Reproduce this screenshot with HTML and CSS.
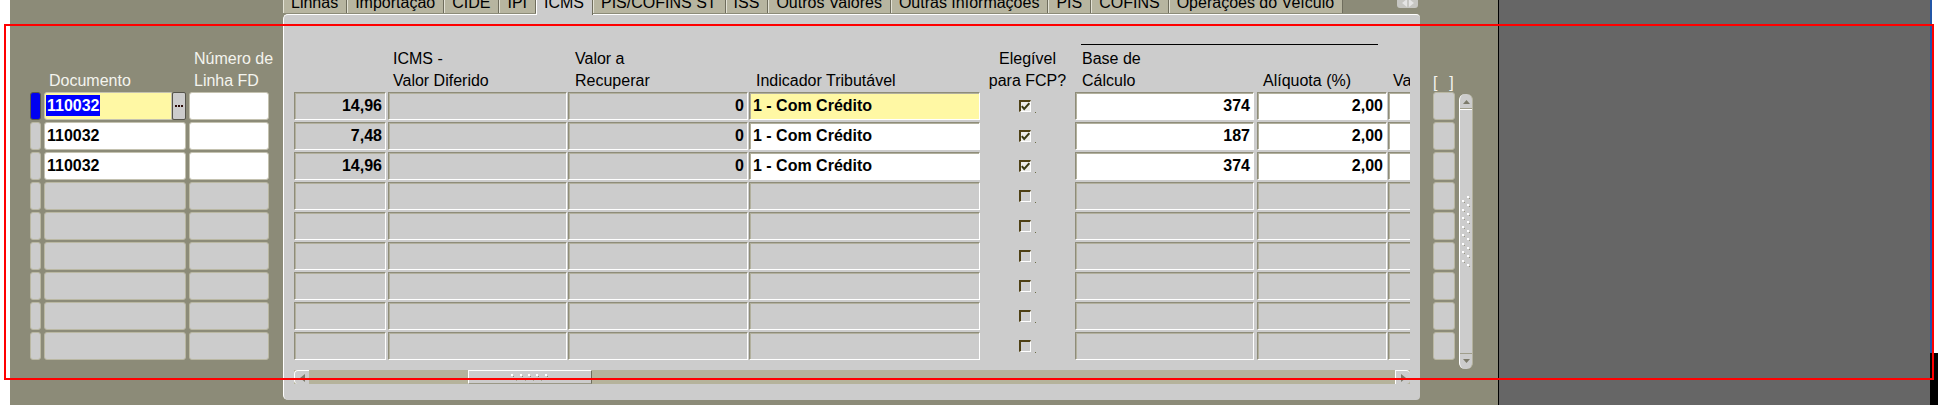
FILE: index.html
```html
<!DOCTYPE html>
<html>
<head>
<meta charset="utf-8">
<link rel="stylesheet" href="styles.css">
</head>
<body>
<div class="screen">
  <div class="edge-left"></div>
  <div class="window">
    <section class="left">
      <div class="head">
        <div class="w-ind"></div>
        <div class="w-doc lbl">Documento</div>
        <div class="w-num lbl">Número de<br>Linha FD</div>
      </div>
      <div class="rows">
        <div class="lrow">
          <div class="ind cur"></div>
          <div class="w-doc docwrap">
            <div class="lf yellow docmain"><span class="hl">110032</span></div>
            <div class="lov"><svg width="8" height="2" viewBox="0 0 8 2"><rect x="0" y="0" width="2" height="2" fill="#2b0b08"/><rect x="3" y="0" width="2" height="2" fill="#2b0b08"/><rect x="6" y="0" width="2" height="2" fill="#2b0b08"/></svg></div>
          </div>
          <div class="lf white w-num"></div>
        </div>
        <div class="lrow"><div class="ind"></div><div class="lf white w-doc">110032</div><div class="lf white w-num"></div></div>
        <div class="lrow"><div class="ind"></div><div class="lf white w-doc">110032</div><div class="lf white w-num"></div></div>
        <div class="lrow"><div class="ind"></div><div class="lf w-doc"></div><div class="lf w-num"></div></div>
        <div class="lrow"><div class="ind"></div><div class="lf w-doc"></div><div class="lf w-num"></div></div>
        <div class="lrow"><div class="ind"></div><div class="lf w-doc"></div><div class="lf w-num"></div></div>
        <div class="lrow"><div class="ind"></div><div class="lf w-doc"></div><div class="lf w-num"></div></div>
        <div class="lrow"><div class="ind"></div><div class="lf w-doc"></div><div class="lf w-num"></div></div>
        <div class="lrow"><div class="ind"></div><div class="lf w-doc"></div><div class="lf w-num"></div></div>
      </div>
    </section>

    <section class="tabarea">
      <div class="tabs">
        <div class="tab">Linhas</div>
        <div class="tab">Importação</div>
        <div class="tab">CIDE</div>
        <div class="tab">IPI</div>
        <div class="tab active">ICMS</div>
        <div class="tab">PIS/COFINS ST</div>
        <div class="tab">ISS</div>
        <div class="tab">Outros Valores</div>
        <div class="tab">Outras Informações</div>
        <div class="tab">PIS</div>
        <div class="tab">COFINS</div>
        <div class="tab">Operações do Veículo</div>
        <div class="tabnav">
          <svg width="14" height="8" viewBox="0 0 14 8"><polygon points="1,4 6,0 6,8" fill="#e4e4e4"/><polygon points="13,4 8,0 8,8" fill="#e4e4e4"/></svg>
        </div>
      </div>
      <div class="panel">
        <div class="viewport">
          <div class="phead">
            <div class="c1"></div>
            <div class="c2 lbl pl5">ICMS -<br>Valor Diferido</div>
            <div class="c3 lbl pl7">Valor a<br>Recuperar</div>
            <div class="c4 lbl pl7">Indicador Tributável</div>
            <div class="ck lbl center">Elegível<br>para FCP?</div>
            <div class="group">
              <div class="gline"></div>
              <div class="gcols">
                <div class="c6 lbl pl7">Base de<br>Cálculo</div>
                <div class="c7 lbl pl6">Alíquota (%)</div>
              </div>
            </div>
            <div class="c8 lbl pl5">Valor</div>
          </div>
          <div class="prows">
            <div class="prow">
              <div class="pc c1 num">14,96</div><div class="pc c2"></div><div class="pc c3 num">0</div><div class="pc c4 yellow">1 - Com Crédito</div>
              <div class="ck cbcell"><span class="cb on"><svg width="9" height="9" viewBox="0 0 9 9"><path d="M0.8 4.2 L3.2 7 L8.4 1.2" stroke="#3b3913" stroke-width="2" fill="none"/></svg></span><span class="dot"></span></div>
              <div class="pc c6 white num">374</div><div class="pc c7 white num">2,00</div><div class="pc c8 white"></div>
            </div>
            <div class="prow">
              <div class="pc c1 num">7,48</div><div class="pc c2"></div><div class="pc c3 num">0</div><div class="pc c4 white">1 - Com Crédito</div>
              <div class="ck cbcell"><span class="cb on"><svg width="9" height="9" viewBox="0 0 9 9"><path d="M0.8 4.2 L3.2 7 L8.4 1.2" stroke="#3b3913" stroke-width="2" fill="none"/></svg></span><span class="dot"></span></div>
              <div class="pc c6 white num">187</div><div class="pc c7 white num">2,00</div><div class="pc c8 white"></div>
            </div>
            <div class="prow">
              <div class="pc c1 num">14,96</div><div class="pc c2"></div><div class="pc c3 num">0</div><div class="pc c4 white">1 - Com Crédito</div>
              <div class="ck cbcell"><span class="cb on"><svg width="9" height="9" viewBox="0 0 9 9"><path d="M0.8 4.2 L3.2 7 L8.4 1.2" stroke="#3b3913" stroke-width="2" fill="none"/></svg></span><span class="dot"></span></div>
              <div class="pc c6 white num">374</div><div class="pc c7 white num">2,00</div><div class="pc c8 white"></div>
            </div>
            <div class="prow"><div class="pc c1"></div><div class="pc c2"></div><div class="pc c3"></div><div class="pc c4"></div><div class="ck cbcell"><span class="cb"></span><span class="dot"></span></div><div class="pc c6"></div><div class="pc c7"></div><div class="pc c8"></div></div>
            <div class="prow"><div class="pc c1"></div><div class="pc c2"></div><div class="pc c3"></div><div class="pc c4"></div><div class="ck cbcell"><span class="cb"></span><span class="dot"></span></div><div class="pc c6"></div><div class="pc c7"></div><div class="pc c8"></div></div>
            <div class="prow"><div class="pc c1"></div><div class="pc c2"></div><div class="pc c3"></div><div class="pc c4"></div><div class="ck cbcell"><span class="cb"></span><span class="dot"></span></div><div class="pc c6"></div><div class="pc c7"></div><div class="pc c8"></div></div>
            <div class="prow"><div class="pc c1"></div><div class="pc c2"></div><div class="pc c3"></div><div class="pc c4"></div><div class="ck cbcell"><span class="cb"></span><span class="dot"></span></div><div class="pc c6"></div><div class="pc c7"></div><div class="pc c8"></div></div>
            <div class="prow"><div class="pc c1"></div><div class="pc c2"></div><div class="pc c3"></div><div class="pc c4"></div><div class="ck cbcell"><span class="cb"></span><span class="dot"></span></div><div class="pc c6"></div><div class="pc c7"></div><div class="pc c8"></div></div>
            <div class="prow"><div class="pc c1"></div><div class="pc c2"></div><div class="pc c3"></div><div class="pc c4"></div><div class="ck cbcell"><span class="cb"></span><span class="dot"></span></div><div class="pc c6"></div><div class="pc c7"></div><div class="pc c8"></div></div>
          </div>
          <div class="hscroll">
            <div class="hbtn lft"><svg width="5" height="8" viewBox="0 0 5 8"><polygon points="0,4 5,0 5,8" fill="#7c7a6a"/></svg></div>
            <div class="hthumb">
              <svg width="38" height="8" viewBox="0 0 38 8">
                <rect x="0" y="0" width="2" height="2" fill="#fff"/><rect x="2" y="2" width="1" height="1" fill="#8c8a78"/>
                <rect x="9" y="0" width="2" height="2" fill="#fff"/><rect x="11" y="2" width="1" height="1" fill="#8c8a78"/>
                <rect x="17" y="0" width="2" height="2" fill="#fff"/><rect x="19" y="2" width="1" height="1" fill="#8c8a78"/>
                <rect x="25" y="0" width="2" height="2" fill="#fff"/><rect x="27" y="2" width="1" height="1" fill="#8c8a78"/>
                <rect x="34" y="0" width="2" height="2" fill="#fff"/><rect x="36" y="2" width="1" height="1" fill="#8c8a78"/>
                <rect x="5" y="6" width="1" height="1" fill="#a8a694"/>
                <rect x="14" y="6" width="1" height="1" fill="#a8a694"/><rect x="22" y="6" width="1" height="1" fill="#a8a694"/>
                <rect x="30" y="6" width="1" height="1" fill="#a8a694"/>
              </svg>
            </div>
            <div class="hbtn rgt"><svg width="5" height="8" viewBox="0 0 5 8"><polygon points="5,4 0,0 0,8" fill="#7c7a6a"/></svg></div>
          </div>
        </div>
      </div>
    </section>

    <section class="right">
      <div class="rhead"><div class="rlbl">[&nbsp;&nbsp;]</div></div>
      <div class="rbody">
        <div class="rboxes">
          <div class="rbox"></div><div class="rbox"></div><div class="rbox"></div>
          <div class="rbox"></div><div class="rbox"></div><div class="rbox"></div>
          <div class="rbox"></div><div class="rbox"></div><div class="rbox"></div>
        </div>
        <div class="vscroll">
          <div class="vup"><svg width="7" height="4" viewBox="0 0 7 4"><polygon points="0,4 3.5,0 7,4" fill="#7c7a6a"/></svg></div>
          <div class="vthumb">
            <svg width="8" height="72" viewBox="0 0 8 72">
              <g fill="#fff">
                <rect x="5" y="0" width="2" height="2"/><rect x="0" y="4" width="2" height="2"/>
                <rect x="5" y="8" width="2" height="2"/><rect x="0" y="13" width="2" height="2"/>
                <rect x="5" y="17" width="2" height="2"/><rect x="0" y="21" width="2" height="2"/>
                <rect x="5" y="25" width="2" height="2"/><rect x="0" y="30" width="2" height="2"/>
                <rect x="5" y="34" width="2" height="2"/><rect x="0" y="38" width="2" height="2"/>
                <rect x="5" y="42" width="2" height="2"/><rect x="0" y="47" width="2" height="2"/>
                <rect x="5" y="51" width="2" height="2"/><rect x="0" y="55" width="2" height="2"/>
                <rect x="5" y="59" width="2" height="2"/><rect x="0" y="64" width="2" height="2"/>
                <rect x="5" y="68" width="2" height="2"/>
              </g>
              <g fill="#9c9a88">
                <rect x="7" y="2" width="1" height="1"/><rect x="2" y="6" width="1" height="1"/>
                <rect x="7" y="10" width="1" height="1"/><rect x="2" y="15" width="1" height="1"/>
                <rect x="7" y="19" width="1" height="1"/><rect x="2" y="23" width="1" height="1"/>
                <rect x="7" y="27" width="1" height="1"/><rect x="2" y="32" width="1" height="1"/>
                <rect x="7" y="36" width="1" height="1"/><rect x="2" y="40" width="1" height="1"/>
                <rect x="7" y="44" width="1" height="1"/><rect x="2" y="49" width="1" height="1"/>
                <rect x="7" y="53" width="1" height="1"/><rect x="2" y="57" width="1" height="1"/>
                <rect x="7" y="61" width="1" height="1"/><rect x="2" y="66" width="1" height="1"/>
                <rect x="7" y="70" width="1" height="1"/>
              </g>
            </svg>
          </div>
          <div class="vdown"><svg width="7" height="4" viewBox="0 0 7 4"><polygon points="0,0 3.5,4 7,0" fill="#7c7a6a"/></svg></div>
        </div>
      </div>
    </section>
  </div>
  <div class="divider"></div>
  <div class="desktop"></div>
  <div class="edge-right">
    <div class="er-top"><div class="er-blue"></div><div class="er-white"></div></div>
    <div class="er-bottom"></div>
  </div>
  <div class="annot"></div>
</div>
</body>
</html>
```

FILE: styles.css
```css
* { box-sizing: border-box; }
html, body { margin: 0; padding: 0; }
body {
  width: 1938px;
  height: 405px;
  overflow: hidden;
  background: #fff;
  font-family: "Liberation Sans", Arial, sans-serif;
  font-size: 16px;
  color: #000;
}
.screen { position: relative; display: flex; width: 1938px; height: 405px; }
.edge-left { width: 10px; flex-shrink: 0; background: #fff; }
.window {
  width: 1488px; flex-shrink: 0;
  background: #8c8b78;
  display: flex; align-items: flex-start;
}
.divider { width: 1px; flex-shrink: 0; background: #000; }
.desktop { width: 431px; flex-shrink: 0; background: #666666; }
.edge-right { width: 8px; flex-shrink: 0; display: flex; flex-direction: column; }
.er-top { height: 353px; display: flex; }
.er-blue { width: 2px; background: #2356a6; }
.er-white { flex: 1; background: #fff; }
.er-bottom { flex: 1; background: #000; }
.annot {
  position: absolute; left: 4px; top: 24px;
  width: 1930px; height: 356px;
  border: 2px solid #ff0000;
  pointer-events: none;
}

.lbl { line-height: 22px; white-space: nowrap; }
.pl5 { padding-left: 5px; }
.pl6 { padding-left: 6px; }
.pl7 { padding-left: 7px; }
.center { text-align: center; }

/* left block */
.left { width: 273px; flex-shrink: 0; padding-left: 20px; }
.head { height: 92px; display: flex; align-items: flex-end; gap: 3px; }
.left .lbl { color: #f4f4ee; padding-left: 5px; }
.w-ind { width: 11px; flex-shrink: 0; }
.w-doc { width: 142px; flex-shrink: 0; }
.w-num { width: 80px; flex-shrink: 0; }
.rows { display: flex; flex-direction: column; gap: 2px; }
.lrow { display: flex; gap: 3px; height: 28px; }
.ind {
  width: 11px; flex-shrink: 0;
  border: 1px solid #bab8a3; border-radius: 3px; background: #cccccc;
}
.ind.cur { background: #0000f2; border-color: #5b5a4c; }
.lf {
  height: 28px;
  border: 1px solid #bab8a3; border-radius: 3px;
  background: #cccccc;
  font-weight: bold; line-height: 26px;
  padding: 0 2px; white-space: nowrap; overflow: hidden;
}
.lf.white { background: #ffffff; border-color: #c4c2b0; }
.lf.yellow { background: #fff8a4; border-color: #c4c2b0; }
.docwrap { display: flex; }
.docmain { width: 128px; border-radius: 3px 0 0 3px; }
.lov {
  width: 14px; height: 28px;
  background: #cccccc;
  border: 1px solid #55544a; border-radius: 2px;
  display: flex; align-items: center; justify-content: center;
}
.hl { background: #0000ff; color: #fff; padding: 2px 0 2px 1px; margin-left: -1px; }

/* tab area */
.tabarea { width: 1137px; flex-shrink: 0; display: flex; flex-direction: column; }
.tabs { height: 20px; margin-top: -6px; display: flex; align-items: flex-start; }
.tab {
  height: 19px;
  padding: 0 8px 0 7px;
  line-height: 18px;
  background: #b7b5a0;
  color: #000;
  border-left: 1px solid #e4e3d6;
  border-right: 1px solid #6f6d5d;
  border-radius: 4px 4px 0 0;
  white-space: nowrap;
  flex-shrink: 0;
}
.tab.active {
  background: #cccccc;
  border-left-color: #ffffff;
  height: 21px;
  position: relative;
  z-index: 1;
}
.tabnav {
  margin-left: auto; margin-right: 2px;
  width: 21px; height: 14px;
  background: #c6c6c2;
  border-radius: 0 0 3px 3px;
  display: flex; align-items: flex-end; justify-content: center;
  padding-bottom: 1px;
}
.panel {
  height: 386px;
  background: #cccccc;
  border-top: 1px solid #ffffff;
  border-left: 1px solid #ffffff;
  border-radius: 5px 4px 4px 5px;
  padding: 0 10px;
}
.viewport { width: 1116px; overflow: hidden; }
.phead { height: 77px; display: flex; align-items: flex-end; }
.prows { display: flex; flex-direction: column; gap: 2px; }
.prow { display: flex; height: 28px; }

.c1 { width: 92px; flex-shrink: 0; }
.c2 { width: 179px; flex-shrink: 0; margin-left: 2px; }
.c3 { width: 180px; flex-shrink: 0; margin-left: 1px; }
.c4 { width: 231px; flex-shrink: 0; margin-left: 1px; }
.ck { width: 95px; flex-shrink: 0; }
.c6 { width: 179px; flex-shrink: 0; }
.c7 { width: 130px; flex-shrink: 0; margin-left: 3px; }
.c8 { width: 60px; flex-shrink: 0; margin-left: 1px; }

.group { width: 312px; flex-shrink: 0; display: flex; flex-direction: column; }
.gline { height: 0; border-top: 1px solid #000; margin: 0 9px 3px 6px; }
.gcols { display: flex; align-items: flex-end; }

.pc {
  height: 28px;
  background: #cccccc;
  border-top: 1px solid #8e8c79;
  border-left: 1px solid #8e8c79;
  border-right: 1px solid #ffffff;
  border-bottom: 1px solid #ffffff;
  box-shadow: inset 1px 1px 0 #b2b09d;
  font-weight: bold;
  line-height: 26px;
  padding: 0 3px;
  white-space: nowrap;
  overflow: hidden;
}
.pc.white { background: #ffffff; }
.pc.yellow { background: #fff8a4; }
.num { text-align: right; }

.cbcell { display: flex; align-items: center; padding-left: 39px; }
.cb {
  width: 12px; height: 12px;
  border-top: 2px solid #4e4014;
  border-left: 2px solid #4e4014;
  border-right: 1px solid #ffffff;
  border-bottom: 1px solid #ffffff;
  display: flex;
}
.cb.on { background: #ececea; }
.dot { width: 1px; height: 1px; background: #6b6a45; margin-left: 4px; margin-top: 12px; }

.hscroll { margin-top: 10px; height: 14px; display: flex; background: #b5b39b; }
.hbtn {
  width: 15px; height: 14px;
  background: #cccccc;
  display: flex; align-items: center; justify-content: center;
}
.hbtn.lft { border-radius: 4px 0 0 4px; border-left: 1px solid #fff; border-top: 1px solid #fff; }
.hbtn.rgt { margin-left: auto; border-radius: 0 4px 4px 0; border-left: 1px solid #fff; border-top: 1px solid #fff; }
.hthumb {
  margin-left: 159px; width: 124px; height: 14px;
  background: #cccccc;
  border-top: 1px solid #ffffff;
  border-left: 1px solid #ffffff;
  border-right: 1px solid #6f6d5c;
  border-bottom: 1px solid #9a9886;
  display: flex; justify-content: center; align-items: flex-start;
  padding-top: 3px;
}

/* right block */
.right { width: 78px; flex-shrink: 0; }
.rhead { height: 92px; display: flex; align-items: flex-end; padding-left: 13px; }
.rlbl { color: #f4f4ee; line-height: 22px; margin-bottom: -2px; letter-spacing: 1px; white-space: nowrap; }
.rbody { display: flex; gap: 4px; padding-left: 13px; }
.rboxes { display: flex; flex-direction: column; gap: 2px; }
.rbox {
  width: 22px; height: 28px;
  border: 1px solid #bab8a3; border-radius: 3px;
  background: #cccccc;
}
.vscroll {
  margin-top: 2px;
  width: 14px; height: 275px;
  background: #cccccc;
  border-left: 1px solid #ffffff;
  border-right: 1px solid #b4b29e;
  border-radius: 6px;
  display: flex; flex-direction: column;
}
.vup {
  height: 15px;
  border-bottom: 1px solid #a09e8b;
  display: flex; align-items: center; justify-content: center;
  padding-top: 2px;
}
.vthumb {
  flex: 1;
  border-top: 1px solid #ffffff;
  display: flex; align-items: center; justify-content: center;
}
.vdown {
  height: 16px;
  border-top: 1px solid #a09e8b;
  display: flex; align-items: center; justify-content: center;
  padding-bottom: 2px;
}
```
